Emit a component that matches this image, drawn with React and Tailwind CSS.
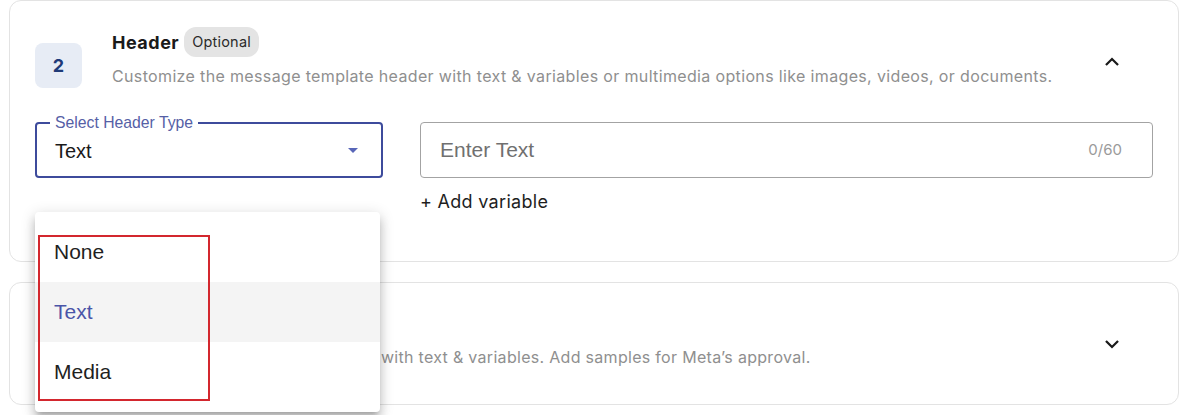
import React from "react";

const geo = { fontFamily: "Inter, 'Noto Sans', sans-serif" };
const ari = { fontFamily: "'Liberation Sans', Arial, sans-serif" };

function ChevronUp() {
  return (
    <svg width="18" height="18" viewBox="0 0 24 24" fill="none" stroke="#1a1a1a" strokeWidth="3" strokeLinecap="square">
      <path d="M5 15l7-7 7 7" />
    </svg>
  );
}
function ChevronDown() {
  return (
    <svg width="18" height="18" viewBox="0 0 24 24" fill="none" stroke="#1a1a1a" strokeWidth="3" strokeLinecap="square">
      <path d="M5 9l7 7 7-7" />
    </svg>
  );
}

export default function App() {
  return (
    <div className="relative w-[1180px] h-[415px] bg-white overflow-hidden" style={geo}>
      <div className="flex flex-col gap-[20px] pl-[9px] pr-[1px]">
        {/* Card 1 */}
        <div className="h-[262px] rounded-[12px] border border-[#e3e3e3] bg-white px-[25px] pt-[26px]">
          <div className="flex items-start">
            <div className="mt-[16px] w-[47px] h-[45px] rounded-[8px] bg-[#e7ecf5] flex items-center justify-center text-[18px] font-bold text-[#1f3a78]">
              2
            </div>
            <div className="ml-[30px] flex-1">
              <div className="flex items-center gap-[5px] h-[30px]">
                <span className="text-[18px] font-bold tracking-[0.5px] text-[#1a1a1a]">Header</span>
                <span className="h-[30px] px-[8px] rounded-[12px] bg-[#e4e4e4] flex items-center text-[14.5px] tracking-[0.2px] text-[#2a2a2a]">Optional</span>
              </div>
              <div className="mt-[8px] text-[16px] tracking-[0.35px] leading-[22px] text-[#8f8f8f] whitespace-nowrap">
                Customize the message template header with text &amp; variables or multimedia options like images, videos, or documents.
              </div>
            </div>
            <div className="mt-[26px] mr-[32px]">
              <ChevronUp />
            </div>
          </div>
          <div className="flex mt-[34px] gap-[37px]">
            <div className="relative w-[348px] h-[56px] rounded-[4px] border-2 border-[#3d4b9c] flex items-center pl-[18px] pr-[16px]" style={ari}>
              <span className="absolute left-[13px] top-[-10px] bg-white px-[5px] text-[15.75px] leading-[18px] text-[#5560a6]">Select Header Type</span>
              <span className="flex-1 text-[20px] pt-[2px] text-[#1a1a1a]">Text</span>
              <svg width="24" height="24" viewBox="0 0 24 24" fill="#5866b8"><path d="M7 10l5 5 5-5z" /></svg>
            </div>
            <div className="flex-1 flex flex-col">
              <div className="h-[56px] rounded-[4px] border border-[#a3a3a3] flex items-center pl-[19px] pr-[30px]" style={ari}>
                <span className="flex-1 text-[21px] text-[#707070]">Enter Text</span>
                <span className="text-[15px] text-[#9a9a9a]" style={geo}>0/60</span>
              </div>
              <div className="mt-[12px] text-[18px] tracking-[0.3px] leading-[24px] text-[#1e1e1e]">+ Add variable</div>
            </div>
          </div>
        </div>
        {/* Card 2 */}
        <div className="h-[123px] rounded-[12px] border border-[#e3e3e3] bg-white px-[25px] pt-[26px]">
          <div className="flex items-start">
            <div className="mt-[16px] w-[47px] h-[45px] rounded-[8px] bg-[#e7ecf5] flex items-center justify-center text-[18px] font-bold text-[#1f3a78]">
              3
            </div>
            <div className="ml-[30px] flex-1">
              <div className="flex items-center gap-[5px] h-[30px]">
                <span className="text-[18px] font-bold tracking-[0.5px] text-[#1a1a1a]">Body</span>
              </div>
              <div className="mt-[7px] text-[16px] tracking-[0.3px] leading-[22px] text-[#8f8f8f] whitespace-nowrap">
                Customize the key message body with text &amp; variables. Add samples for Meta’s approval.
              </div>
            </div>
            <div className="mt-[26px] mr-[32px]">
              <ChevronDown />
            </div>
          </div>
        </div>
      </div>

      {/* Dropdown menu */}
      <div
        className="absolute left-[35px] top-[212px] w-[345px] rounded-[4px] bg-white py-[10px] shadow-[0px_5px_5px_-3px_rgba(0,0,0,0.2),0px_8px_10px_1px_rgba(0,0,0,0.14),0px_3px_14px_2px_rgba(0,0,0,0.12)]"
        style={ari}
      >
        <div className="h-[60px] flex items-center pl-[19px] text-[21px] text-[#1f1f1f]">None</div>
        <div className="h-[60px] flex items-center pl-[19px] text-[21px] text-[#4a55a8] bg-[#f4f4f4]">Text</div>
        <div className="h-[60px] flex items-center pl-[19px] text-[21px] text-[#1f1f1f]">Media</div>
      </div>
      <div className="absolute left-[38px] top-[235px] w-[172px] h-[166px] border-2 border-[#d3272e]" />
    </div>
  );
}
